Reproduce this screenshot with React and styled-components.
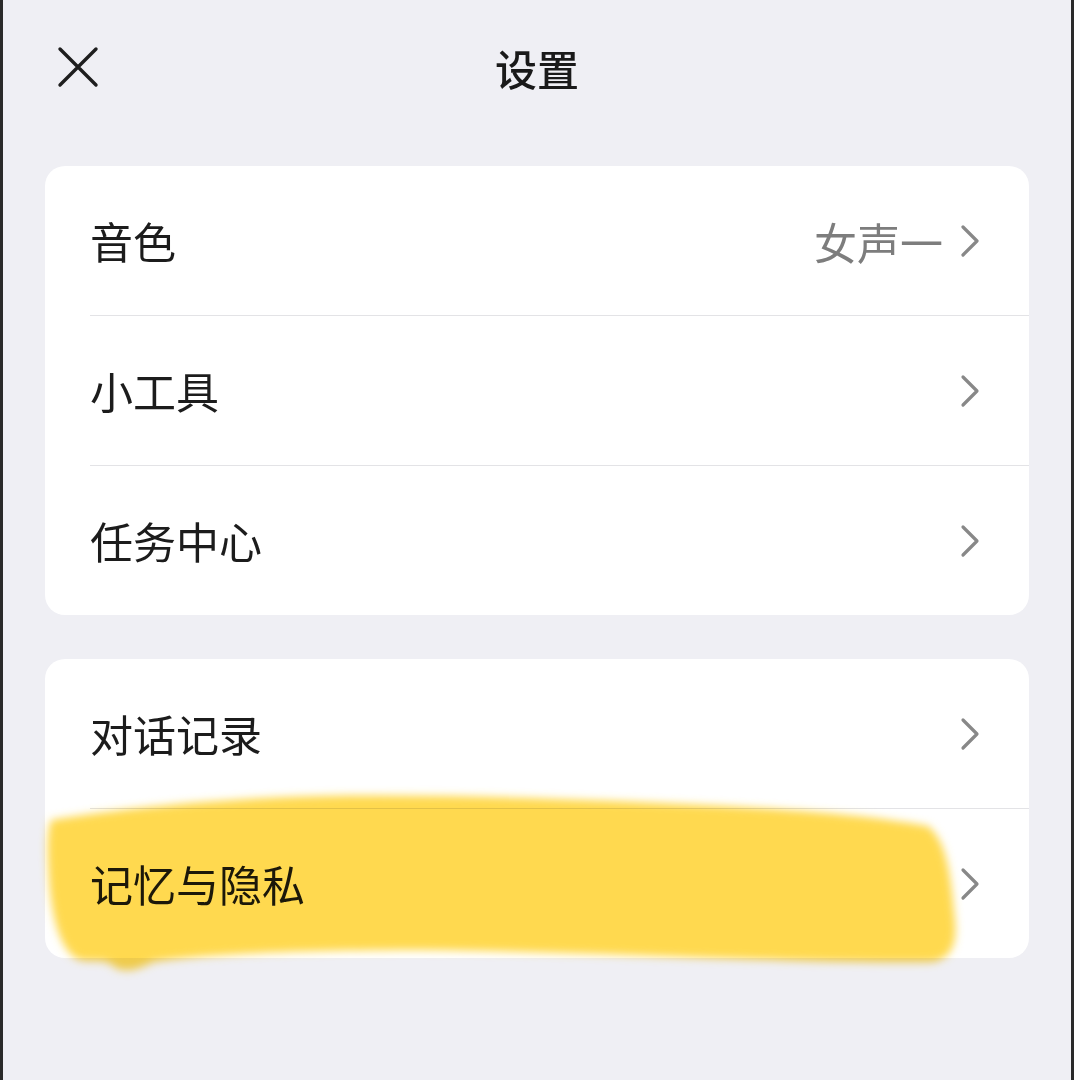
import React from "react";
import styled, { createGlobalStyle } from "styled-components";

const Global = createGlobalStyle`
  html, body { margin: 0; padding: 0; background: #efeff4; }
  * { box-sizing: border-box; }
  body { font-family: "Noto Sans CJK SC", "Noto Sans", sans-serif; }
`;

const Page = styled.div`
  position: relative;
  width: 1074px;
  height: 1080px;
  background: #efeff4;
  border-left: 3px solid #2a2a2a;
  border-right: 3px solid #2a2a2a;
  padding: 0 42px;
  overflow: hidden;
  display: flex;
  flex-direction: column;
  gap: 44px;
`;

const Header = styled.div`
  position: relative;
  height: 122px;
  display: flex;
  align-items: center;
  justify-content: center;
`;

const Close = styled.button`
  position: absolute;
  left: 12px;
  top: 46px;
  width: 42px;
  height: 42px;
  border: none;
  background: none;
  padding: 0;
  cursor: pointer;
`;

const Title = styled.h1`
  margin: 0;
  margin-top: 12px;
  font-size: 42px;
  font-weight: 500;
  color: #1a1a1a;
`;

const Card = styled.div`
  background: #fff;
  border-radius: 20px;
  overflow: hidden;
`;

const Row = styled.div`
  height: ${(p) => (p.$first ? 149 : 150)}px;
  margin-left: 45px;
  padding-right: 48px;
  display: flex;
  align-items: center;
  border-top: ${(p) => (p.$first ? "none" : "1px solid #e3e3e6")};
`;

const Label = styled.span`
  flex: 1;
  font-size: 43px;
  color: #1c1c1c;
  margin-top: -2px;
`;

const Value = styled.span`
  font-size: 43px;
  color: #7d7d7d;
  margin-right: 16px;
`;

const Chevron = () => (
  <svg width="22" height="34" viewBox="0 0 22 34">
    <path d="M4 3 L18 17 L4 31" fill="none" stroke="#888" strokeWidth="3.2" strokeLinecap="round" strokeLinejoin="round" />
  </svg>
);

const Marker = styled.svg`
  position: absolute;
  left: 0;
  top: 780px;
  mix-blend-mode: multiply;
  pointer-events: none;
`;

const Item = ({ label, value, first }) => (
  <Row $first={first}>
    <Label>{label}</Label>
    {value && <Value>{value}</Value>}
    <Chevron />
  </Row>
);

export default function App() {
  return (
    <>
      <Global />
      <Page>
        <Header>
          <Close aria-label="关闭">
            <svg width="42" height="42" viewBox="0 0 42 42">
              <path d="M3 3 L39 39 M39 3 L3 39" stroke="#1e1e1e" strokeWidth="3.4" strokeLinecap="round" />
            </svg>
          </Close>
          <Title>设置</Title>
        </Header>
        <Card>
          <Item first label="音色" value="女声一" />
          <Item label="小工具" />
          <Item label="任务中心" />
        </Card>
        <Card>
          <Item first label="对话记录" />
          <Item label="记忆与隐私" />
        </Card>
        <Marker width="1074" height="220" viewBox="0 0 1074 220">
          <defs>
            <filter id="soft" x="-5%" y="-20%" width="110%" height="140%">
              <feGaussianBlur stdDeviation="4" />
            </filter>
          </defs>
          <path
            filter="url(#soft)"
            fill="#ffd94f"
            d="M48 40 C120 28 220 18 320 16 C450 14 600 20 720 26 C800 30 870 36 925 46
               C945 62 948 100 952 140 C954 162 950 178 930 182
               C800 184 600 172 420 170 C300 170 200 174 150 182
               C135 190 120 194 110 186 C100 176 80 186 70 176
               C55 164 48 130 46 100 C44 70 44 52 48 40 Z"
          />
        </Marker>
      </Page>
    </>
  );
}
